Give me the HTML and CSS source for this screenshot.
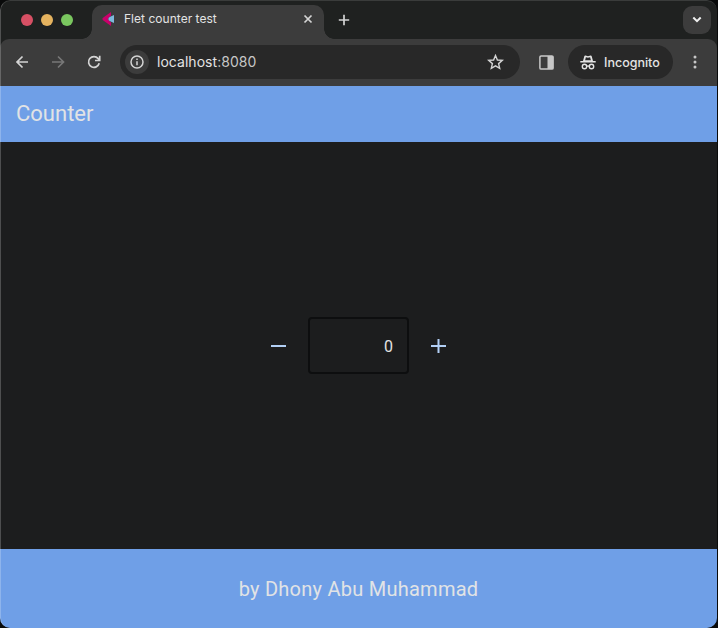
FILE: index.html
```
<!DOCTYPE html>
<html lang="en">
<head>
<meta charset="utf-8">
<title>Flet counter test</title>
<link rel="stylesheet" href="styles.css">
</head>
<body>
<div class="window">
  <header class="tabs">
    <div class="lights"><i class="red"></i><i class="yellow"></i><i class="green"></i></div>
    <div class="tab">
      <svg class="favicon" width="13" height="16" viewBox="0 0 13 16"><path d="M9 1v3.500L5.800 8 9 11.500V15L1 9.200Q-.2 8 1 6.800Z" fill="#c9006b"/><path d="M12 4v8L7.600 10Q5 8 7.600 6Z" fill="#7db7dc"/></svg>
      <span class="tab-title">Flet counter test</span>
      <svg class="close" width="10" height="10" viewBox="0 0 10 10"><path d="m1.500 1.500 7 7m0-7-7 7"/></svg>
    </div>
    <svg class="new-tab" width="12" height="12" viewBox="0 0 12 12"><path d="M6 .8v10.400M.8 6h10.400"/></svg>
    <div class="tab-search"><svg width="10" height="8" viewBox="0 0 10 8"><path d="m1.300 1.500 3.700 3.700L8.700 1.500"/></svg></div>
  </header>
  <nav class="toolbar">
    <svg class="back" width="14" height="14" viewBox="0 0 14 14"><path d="M13 7H2.300M7.500 1.500 2 7 7.500 12.500"/></svg>
    <svg class="forward" width="14" height="14" viewBox="0 0 14 14"><path d="M1 7h11.200M7 1.500 12.500 7 7 12.500"/></svg>
    <svg class="reload" width="14" height="14" viewBox="0 0 14 14"><path d="M12.200 8.300A5.400 5.400 0 1 1 11.200 3.600L12.500 5M12.700.8v4.700H8"/></svg>
    <div class="address">
      <div class="info"><svg width="14" height="14" viewBox="0 0 14 14"><circle cx="7" cy="7" r="6"/><path d="M7 6.300v4M7 3.500v1.500"/></svg></div>
      <span class="url">localhost<span class="port">:8080</span></span>
      <svg class="star" width="17" height="16" viewBox="0 0 17 16"><path d="m8.500 1.500 1.900 4.500 4.900.4-3.700 3.200 1.100 4.800-4.200-2.500-4.200 2.500 1.100-4.800L1.700 6.400l4.900-.4Z"/></svg>
    </div>
    <svg class="panel" width="15" height="15" viewBox="0 0 15 15"><rect x=".9" y=".9" width="13.200" height="13.200" rx="1.200"/><path d="M8.500 1h5.600v13H8.500Z"/></svg>
    <div class="incognito">
      <svg width="16" height="15" viewBox="0 0 16 15"><path class="hat" d="M3 6 4.300 1.300Q4.600.4 5.500.6L8 1.200l2.500-.6q.9-.2 1.200.7L13 6h2.700v1.500H.3V6Z"/><path class="band" d="M5.100 5.300 5.900 2.300 8 2.700l2.100-.4.8 3Z"/><circle cx="4.500" cy="11.500" r="2.200"/><circle cx="11.500" cy="11.500" r="2.200"/><path class="bridge" d="M6.700 11.300q1.300-.9 2.600 0"/></svg>
      <span>Incognito</span>
    </div>
    <svg class="more" width="4" height="14" viewBox="0 0 4 14"><circle cx="2" cy="2" r="1.500"/><circle cx="2" cy="7" r="1.500"/><circle cx="2" cy="12" r="1.500"/></svg>
  </nav>
  <div class="appbar"><span>Counter</span></div>
  <main class="counter">
    <svg class="step" width="16" height="16" viewBox="0 0 16 16"><path d="M1 8h15"/></svg>
    <div class="field">0</div>
    <svg class="step" width="16" height="16" viewBox="0 0 16 16"><path d="M0 8h15M7.500 1v14"/></svg>
  </main>
  <footer class="footer"><span>by Dhony Abu Muhammad</span></footer>
</div>
</body>
</html>
```
FILE: styles.css
```
* { box-sizing: border-box; }
body { margin: 0; background: #090a0a; }
svg { display: block; flex: none; fill: none; stroke: #d4d4d4; stroke-width: 1.7; }
.window {
  position: relative;
  width: 717px;
  height: 628px;
  display: flex;
  flex-direction: column;
  overflow: hidden;
  border-radius: 10px;
  background: #1f2120;
  font-family: Inter, "Liberation Sans", sans-serif;
  color: #e3e3e3;
}
.window::after {
  content: "";
  position: absolute;
  inset: 0;
  border: solid rgba(255, 255, 255, .22);
  border-width: 1px 0 0 1px;
  border-top-color: rgba(255, 255, 255, .12);
  border-radius: 10px;
}
.tabs { height: 39px; flex: none; display: flex; align-items: center; padding-right: 6px; }
.lights { width: 92px; padding-left: 21px; display: flex; gap: 8px; }
.lights i { width: 12px; height: 12px; border-radius: 50%; }
.red { background: #d75064; }
.yellow { background: #e5b35f; }
.green { background: #7ac75f; }
.tab {
  position: relative;
  align-self: flex-end;
  width: 232px;
  height: 34px;
  padding: 0 11px 6px 10px;
  display: flex;
  align-items: center;
  border-radius: 10px 10px 0 0;
  background: #3c3c3c;
  font-size: 12px;
}
.tab::before, .tab::after { content: ""; position: absolute; bottom: 0; width: 10px; height: 10px; }
.tab::before { left: -10px; background: radial-gradient(circle at 0 0, transparent 9.5px, #3c3c3c 10px); }
.tab::after { right: -10px; background: radial-gradient(circle at 100% 0, transparent 9.5px, #3c3c3c 10px); }
.favicon { stroke: none; }
.tab-title { margin-left: 9px; padding-bottom: 2px; letter-spacing: .03px; white-space: nowrap; }
.close { margin-left: auto; }
.new-tab { margin-left: 14px; }
.tab-search {
  width: 28px;
  height: 28px;
  margin-left: auto;
  display: grid;
  place-items: center;
  border-radius: 9px;
  background: #3c3c3c;
}
.tab-search svg { stroke: #eee; stroke-width: 2; }
.toolbar {
  height: 47px;
  flex: none;
  display: flex;
  align-items: center;
  padding: 0 20px 1px 15px;
  border-radius: 9px 9px 0 0;
  background: #3c3c3c;
}
.forward { margin-left: 22px; stroke: #777; }
.reload { margin-left: 22px; }
.address {
  width: 400px;
  height: 34px;
  margin-left: 19px;
  padding: 0 16px 0 5px;
  display: flex;
  align-items: center;
  border-radius: 17px;
  background: #282828;
}
.info { width: 24px; height: 24px; display: grid; place-items: center; border-radius: 50%; background: #3c3c3c; }
.info svg { stroke-width: 1.5; }
.url { margin-left: 8px; padding-bottom: 1px; font-size: 14px; letter-spacing: .04px; }
.port { color: #c7c7c7; }
.star { margin-left: auto; stroke-width: 1.4; }
.panel { margin-left: 19px; stroke: #c7c7c7; stroke-width: 1.5; }
.panel path { fill: #c7c7c7; stroke: none; }
.incognito {
  width: 105px;
  height: 34px;
  margin-left: 14px;
  padding-left: 12px;
  display: flex;
  align-items: center;
  gap: 8px;
  border-radius: 17px;
  background: #282828;
  font-size: 12.5px;
  font-weight: 500;
}
.incognito svg { stroke: #e3e3e3; stroke-width: 1.4; }
.hat { fill: #e3e3e3; stroke: none; }
.band { fill: #282828; stroke: none; }
.more { margin-left: auto; stroke: none; fill: #c7c7c7; }
.appbar, .footer { flex: none; display: flex; align-items: center; background: #6f9fe7; color: #e1e3e5; font-family: Roboto, sans-serif; }
.appbar { height: 56px; padding: 0 0 2px 16px; font-size: 22px; }
.counter { flex: 1; display: flex; align-items: center; justify-content: center; gap: 22px; background: #1c1d1e; }
.step { stroke: #b2cff5; stroke-width: 2; }
.field {
  width: 101px;
  height: 57px;
  padding: 2px 14px 0 0;
  display: flex;
  align-items: center;
  justify-content: flex-end;
  border: 2px solid #0d0e0f;
  border-radius: 4px;
  font: 16px Roboto, sans-serif;
}
.footer { height: 79px; justify-content: center; font-size: 20px; letter-spacing: .25px; }
```
